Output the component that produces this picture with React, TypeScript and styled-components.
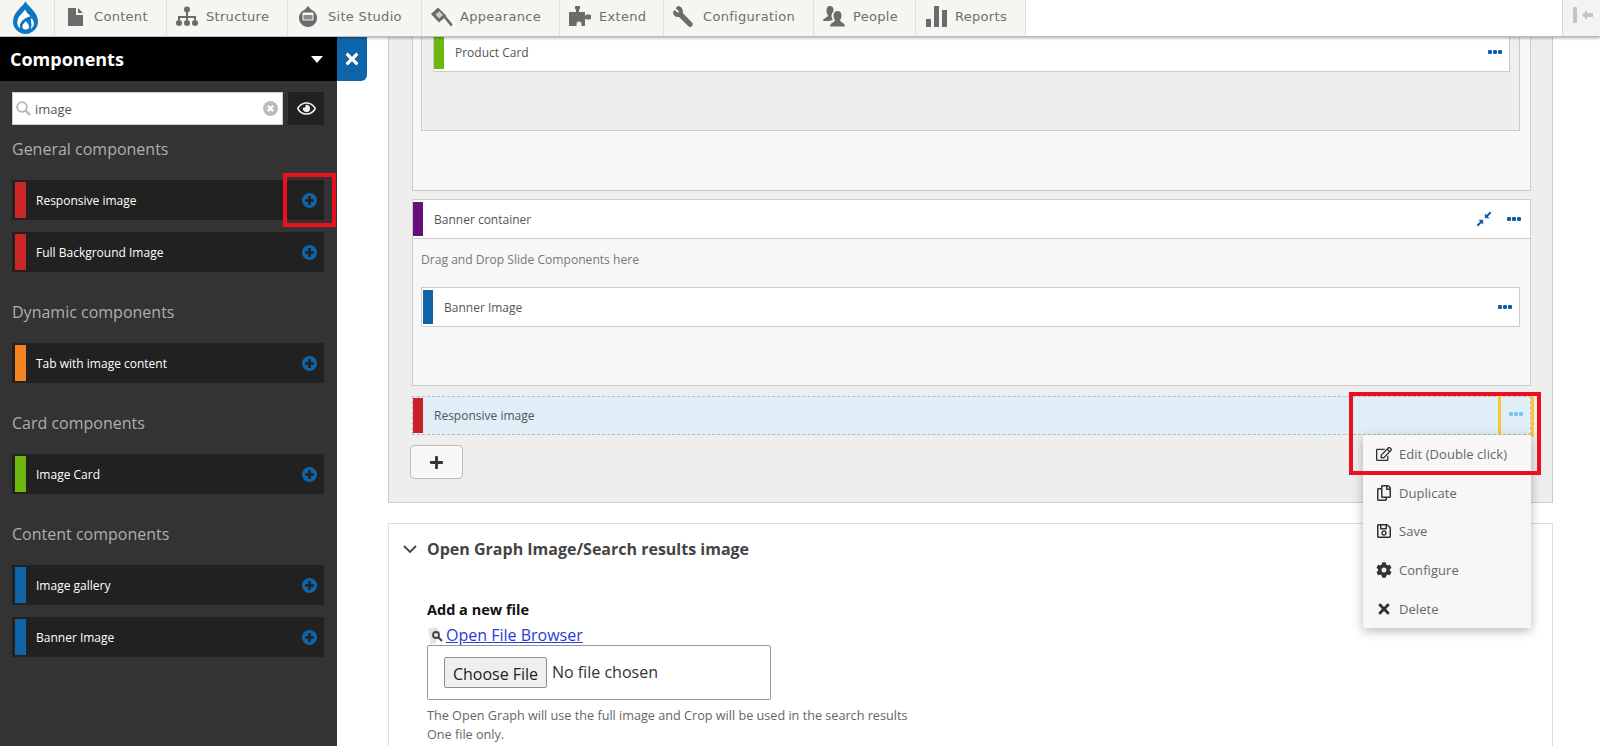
import React from 'react';
import styled, { createGlobalStyle } from 'styled-components';
import { FaRegEdit, FaRegCopy, FaRegSave, FaCog, FaTimes, FaRegEye, FaPlus } from 'react-icons/fa';

const GlobalStyle = createGlobalStyle`
  html, body {
    margin: 0;
    height: 100%;
    overflow: hidden;
    background: #fff;
    font-family: "Open Sans", "Liberation Sans", sans-serif;
  }
  * { box-sizing: border-box; }
`;

const Page = styled.div`
  height: 746px;
  display: flex;
  flex-direction: column;
  overflow: hidden;
`;

/* toolbar */
const Toolbar = styled.nav`
  height: 37px;
  flex: none;
  display: flex;
  position: relative;
  z-index: 3;
  background: #fff;
  border-bottom: 1px solid #bdbdbb;
  box-shadow: 0 1px 3px rgba(0, 0, 0, 0.35);
`;

const LogoCell = styled.div`
  width: 55px;
  background: #f5f5f2;
  border-right: 1px solid #e0e0dc;
  display: flex;
  align-items: center;
  padding: 0 0 2px 13px;
`;

const NavItem = styled.a<{ $w: number; $gap?: number; $pad?: number }>`
  width: ${(p) => p.$w}px;
  display: flex;
  align-items: center;
  gap: ${(p) => p.$gap ?? 10}px;
  padding: 0 0 3px ${(p) => p.$pad ?? 10}px;
  background: #f5f5f2;
  border-right: 1px solid #e0e0dc;
  color: #6f6f6f;
  font: 13px "DejaVu Sans", sans-serif;
  letter-spacing: 0.3px;
  svg { flex: none; fill: #6b6b6b; }
`;

const ToolbarSpacer = styled.div`
  flex: 1;
`;

const ToggleCell = styled.div`
  width: 38px;
  background: #f3f3f3;
  border-left: 1px solid #d8d8d8;
  display: flex;
  align-items: center;
  padding: 0 0 6px 10px;
`;

/* sidebar */
const Body = styled.div`
  flex: 1;
  display: flex;
  min-height: 0;
`;

const Sidebar = styled.aside`
  width: 337px;
  flex: none;
  background: #333;
  position: relative;
  z-index: 2;
`;

const SidebarHeader = styled.div`
  height: 44px;
  background: #000;
  display: flex;
  align-items: center;
  justify-content: space-between;
  padding: 0 14px 0 10px;
  color: #fff;
  font-size: 18px;
  font-weight: 700;
`;

const Caret = styled.span`
  width: 0;
  height: 0;
  border-left: 6px solid transparent;
  border-right: 6px solid transparent;
  border-top: 7px solid #fff;
`;

const CloseTab = styled.button`
  position: absolute;
  top: 0;
  left: 337px;
  width: 30px;
  height: 44px;
  border: 0;
  padding: 0;
  background: #0f65a8;
  border-bottom-right-radius: 6px;
  color: #fff;
  display: flex;
  align-items: center;
  justify-content: center;
`;

const SearchRow = styled.div`
  display: flex;
  gap: 5px;
  padding: 11px 13px 0 12px;
`;

const SearchBox = styled.div`
  flex: 1;
  height: 33px;
  background: #fff;
  border: 1px solid #ccc;
  display: flex;
  align-items: center;
  gap: 4px;
  padding: 0 4px 0 3px;
  color: #555;
  font-size: 13px;
`;

const SearchText = styled.span`
  flex: 1;
`;

const EyeButton = styled.div`
  width: 36px;
  height: 33px;
  background: #212121;
  color: #eee;
  display: flex;
  align-items: center;
  justify-content: center;
`;

const Group = styled.section`
  padding: 14px 13px 0 12px;
  & + & { padding-top: 30px; }
`;

const GroupTitle = styled.h3`
  margin: 0 0 21px;
  height: 20px;
  line-height: 21px;
  font-size: 16px;
  font-weight: 400;
  color: #aeaeae;
`;

const ItemList = styled.div`
  display: flex;
  flex-direction: column;
  gap: 12px;
`;

const Item = styled.div`
  position: relative;
  height: 40px;
  background: #212121;
  display: flex;
  align-items: center;
  padding: 2px 7px 2px 3px;
  color: #fff;
  font-size: 12px;
  font-weight: 500;
`;

const ItemBar = styled.span<{ $color: string }>`
  width: 11px;
  height: 100%;
  background: ${(p) => p.$color};
  margin-right: 10px;
`;

const ItemLabel = styled.span`
  flex: 1;
`;

const AddCircle = styled.span`
  width: 15px;
  height: 15px;
  border-radius: 50%;
  background: #0f65a8;
  color: #212121;
  display: flex;
  align-items: center;
  justify-content: center;
`;

const Highlight = styled.div<{ $l: number; $t: number; $w: number; $h: number }>`
  position: absolute;
  left: ${(p) => p.$l}px;
  top: ${(p) => p.$t}px;
  width: ${(p) => p.$w}px;
  height: ${(p) => p.$h}px;
  border: 4px solid #ea1020;
  z-index: 4;
  pointer-events: none;
`;

/* main column */
const Main = styled.main`
  flex: 1;
  min-width: 0;
  padding: 0 47px 0 51px;
  margin-top: -6px;
  color: #555;
  font-size: 12px;
`;

const LayoutPanel = styled.div`
  background: #eee;
  border: 1px solid #ccc;
  padding: 0 21px 23px 23px;
`;

const Dropzone = styled.div`
  background: #f7f7f7;
  border: 1px solid #ccc;
  border-top: 0;
  padding: 0 10px 59px 8px;
`;

const InnerZone = styled.div`
  background: #eee;
  border: 1px solid #ccc;
  border-top: 0;
  padding: 0 9px 58px 11px;
`;

const Row = styled.div<{ $flush?: boolean; $inset?: number }>`
  height: ${(p) => (p.$flush ? 39 : 40)}px;
  background: #fff;
  border: 1px solid #ccc;
  ${(p) => (p.$flush ? 'border-width: 0 0 1px;' : '')}
  display: flex;
  align-items: center;
  gap: 11px;
  padding: 2px ${(p) => (p.$flush ? 9 : 7)}px 2px ${(p) => p.$inset ?? 1}px;
  color: #555;
  font-size: 12px;
  svg { margin-right: 4px; }
`;

const RowBar = styled.span<{ $color: string }>`
  width: 10px;
  height: 100%;
  background: ${(p) => p.$color};
`;

const RowLabel = styled.span`
  flex: 1;
`;

const Dots = styled.span<{ $light?: boolean }>`
  display: flex;
  gap: 1px;
  span {
    width: 4px;
    height: 4px;
    background: ${(p) => (p.$light ? '#7cc4f0' : '#0f5fa8')};
    border-radius: 1px;
  }
`;

const More = ({ light }: { light?: boolean }) => (
  <Dots $light={light}>
    <span />
    <span />
    <span />
  </Dots>
);

const Container = styled.div`
  margin-top: 8px;
  background: #f7f7f7;
  border: 1px solid #ccc;
`;

const ContainerBody = styled.div`
  padding: 11px 10px 58px 8px;
`;

const DropHint = styled.div`
  color: #777;
  font-size: 12.1px;
  line-height: 20px;
  margin-bottom: 17px;
`;

const SelectedRow = styled.div`
  position: relative;
  height: 39px;
  margin-top: 10px;
  background: #e0eff7;
  border: 1px dashed #bbb;
  display: flex;
  align-items: center;
  padding: 1px 0 1px 0;
  gap: 11px;
  color: #555;
  font-size: 12px;
`;

const RowDivider = styled.span`
  position: absolute;
  top: -1px;
  width: 3px;
  height: 41px;
  background: #fdc42f;
`;

const LeftDivider = styled(RowDivider)`
  left: 1085px;
`;

const RightDivider = styled(RowDivider)`
  left: 1118px;
`;

const DotsSlot = styled.span`
  position: absolute;
  left: 1096px;
  top: 15px;
`;

const Menu = styled.div`
  position: absolute;
  left: 950px;
  top: 38px;
  width: 168px;
  height: 193px;
  background: #f7f7f7;
  box-shadow: 0 3px 10px rgba(0, 0, 0, 0.28);
  z-index: 3;
  display: flex;
  flex-direction: column;
`;

const MenuItem = styled.div`
  height: 38.6px;
  display: flex;
  align-items: center;
  gap: 7px;
  padding-left: 13px;
  color: #666;
  font-size: 13px;
  letter-spacing: 0.05px;
  svg { flex: none; color: #333; }
`;

const AddButton = styled.button`
  display: flex;
  align-items: center;
  justify-content: center;
  margin: 10px 0 0 -2px;
  width: 53px;
  height: 34px;
  padding: 0;
  background: #f7f7f7;
  border: 1px solid #bbb;
  border-radius: 4px;
  color: #333;
`;

const FieldPanel = styled.section`
  margin-top: 20px;
  height: 300px;
  background: #fff;
  border: 1px solid #ddd;
  padding: 15px 38px;
`;

const FieldHead = styled.div`
  display: flex;
  align-items: center;
  height: 20px;
  margin-left: -24px;
  gap: 10px;
  color: #444;
  font-size: 16px;
  font-weight: 700;
`;

const FieldLabel = styled.div`
  margin-top: 41px;
  color: #111;
  font-size: 14.5px;
  font-weight: 700;
  line-height: 20px;
`;

const BrowserLine = styled.div`
  display: flex;
  align-items: center;
  height: 20px;
  margin-top: 5px;
  gap: 2px;
`;

const BrowserLink = styled.a`
  color: #2a3bd8;
  font-size: 16px;
  text-decoration: underline;
`;

const FileBox = styled.div`
  width: 344px;
  height: 55px;
  border: 1px solid #999;
  border-radius: 2px;
  display: flex;
  align-items: center;
  gap: 5px;
  padding: 0 0 2px 16px;
  color: #333;
  font-size: 16px;
`;

const ChooseButton = styled.div`
  width: 103px;
  height: 31px;
  margin-top: 2px;
  padding-top: 2px;
  background: #efefef;
  border: 1px solid #8f8f8f;
  border-radius: 2px;
  display: flex;
  align-items: center;
  justify-content: center;
  color: #222;
`;

const HelpText = styled.div`
  margin-top: 6px;
  color: #666;
  font-size: 12.65px;
  line-height: 18.5px;
`;

const DrupalLogo = () => (
  <svg width="25" height="33" viewBox="0 0 25 33">
    <path d="M12.500 0c1.600 5 12.500 10.500 12.500 20.500a12.500 12.500 0 0 1-25 0C0 10.500 10.900 5 12.500 0z" fill="#0d78c2" />
    <path d="M12 8.500C9.500 12.500 4.800 15 4.300 21c-.2 2.800 1 5 2.900 6.700-.9-2.700-.4-5.400 2-7.900 2-2.100 5-3.700 8.300-4.600C15 13 13.300 11 12 8.500z" fill="#fff" />
    <path d="M17.800 17c2.300 1.500 3.400 3.800 3 6.500-.3 1.900-1.700 3.500-3.400 4.500.9-1.800 1.300-3.600 1-5.500-.2-1.700-.5-3.400-.6-5.500z" fill="#fff" />
    <path d="M12.800 20c.9 1.600 3.200 3 3.200 5.300a3.300 3.300 0 0 1-6.600 0c0-2.300 2.500-3.700 3.400-5.300z" fill="#fff" />
  </svg>
);

const ContentIcon = () => (
  <svg width="15" height="20" viewBox="0 0 15 20">
    <path d="M0 1h8v7h7v11H0zM10 1l5 5h-5z" />
  </svg>
);

const StructureIcon = () => (
  <svg width="22" height="21" viewBox="0 0 22 21">
    <circle cx="11" cy="3.500" r="3" />
    <path d="M10 6h2v4h8v4h-2v-2h-6v2h-2v-2H4v2H2v-4h8z" />
    <circle cx="3" cy="17" r="3" />
    <circle cx="11" cy="17" r="3" />
    <circle cx="19" cy="17" r="3" />
  </svg>
);

const StudioIcon = () => (
  <svg width="20" height="21" viewBox="0 0 20 21">
    <path d="M10 0l3 3.500a9 9 0 1 1-6 0z" />
    <rect x="4.500" y="6.500" width="11" height="8" rx="1" fill="#f5f5f2" />
    <rect x="5.500" y="9" width="9" height="4.500" fill="#8a8a8a" />
  </svg>
);

const AppearanceIcon = () => (
  <svg width="22" height="20" viewBox="0 0 22 20">
    <path d="M0 7l7-6.500 8.500 8.500L8 15.500z" />
    <path d="M4.500 7.500l3.800-3.300 3.600 3.800-3.700 3.400z" fill="#cfcfcc" />
    <path d="M13 11l1.800-1.800 7 8.300-1.900 2z" />
  </svg>
);

const ExtendIcon = () => (
  <svg width="22" height="21" viewBox="0 0 22 21">
    <path d="M6 0h5v2.500L10 4v2h6v4l1.500-1.500H20a2.500 2.500 0 0 1 0 5h-2.500L16 12.500V20h-3.500v-2a2.500 2.500 0 0 0-5 0v2H0V6h7V4L6 2.500z" />
  </svg>
);

const WrenchIcon = () => (
  <svg width="21" height="21" viewBox="0 0 21 21">
    <path d="M5 0L2.500 2 6 5.500 5 7 1.500 4 0 6c0 3 2.500 5.500 6 5l9.500 9.300c1 .9 2.300.9 3.500-.2 1-1.100 1-2.500 0-3.500L9.800 7C10.500 3 8 0 5 0z" />
  </svg>
);

const PeopleIcon = () => (
  <svg width="22" height="21" viewBox="0 0 22 21">
    <path d="M7 0c2.500 0 3.500 2 3.500 4 0 .7-.1 1.400-.4 2-1.100 1-1.600 2.500-1.600 4 0 1.400.5 2.600 1.300 3.500-.5.600-2.800 1.400-3.800 1.500H0c0-3 5-3.500 5-5.500C4 8 3.500 6 3.500 4 3.500 2 4.500 0 7 0z" />
    <path d="M14.500 5c2.500 0 4 2 4 4.500 0 2-.8 3.500-1.500 4.500 0 2.500 5 2.500 5 6.500H7c0-4 5-4 5-6.500-.7-1-1.500-2.500-1.500-4.500C10.500 7 12 5 14.500 5z" />
  </svg>
);

const ReportsIcon = () => (
  <svg width="21" height="21" viewBox="0 0 21 21">
    <rect x="0" y="13" width="5" height="8" />
    <rect x="8" y="0" width="5" height="21" />
    <rect x="16" y="4" width="5" height="17" />
  </svg>
);

const ToggleIcon = () => (
  <svg width="21" height="16" viewBox="0 0 21 16">
    <rect x="0" y="0" width="4" height="16" rx="1" fill="#c4c4c4" />
    <path d="M9 8l5-5v3h6v4h-6v3z" fill="#c4c4c4" />
  </svg>
);

const SearchIcon = () => (
  <svg width="15" height="15" viewBox="0 0 15 15" fill="none" stroke="#b5b5b5" strokeWidth="1.800">
    <circle cx="6" cy="6" r="4.800" />
    <path d="M9.500 9.500l4.500 4.500" strokeWidth="2.400" />
  </svg>
);

const ClearIcon = () => (
  <svg width="15" height="15" viewBox="0 0 15 15">
    <circle cx="7.500" cy="7.500" r="7.500" fill="#bbb" />
    <path d="M4.800 4.800l5.400 5.400M10.200 4.800l-5.400 5.400" stroke="#fff" strokeWidth="2.200" />
  </svg>
);

const CollapseIcon = () => (
  <svg width="16" height="16" viewBox="0 0 16 16" fill="#0f5fa8">
    <path d="M8.800 7.200V2.400l1.700 1.700L14 .6l1.400 1.400-3.500 3.500 1.700 1.700z" />
    <path d="M7.200 8.800v4.800l-1.700-1.700L2 15.400.6 14l3.500-3.500-1.700-1.700z" />
  </svg>
);

const FinderIcon = () => (
  <svg width="17" height="17" viewBox="0 0 17 17">
    <path d="M1 2l8-2 4 5-4 11-5 1z" fill="#e4e4e4" />
    <circle cx="9" cy="8" r="3" fill="none" stroke="#444" strokeWidth="1.800" />
    <path d="M11 10l4 4" stroke="#444" strokeWidth="2.200" />
  </svg>
);

const ChevronIcon = () => (
  <svg width="14" height="8" viewBox="0 0 14 8" fill="none" stroke="#444" strokeWidth="1.800">
    <path d="M1 1l6 6 6-6" />
  </svg>
);

const AddIcon = () => (
  <svg width="9" height="9" viewBox="0 0 9 9">
    <path d="M3.200 0h2.600v3.200H9v2.600H5.800V9H3.200V5.800H0V3.200h3.200z" fill="#212121" />
  </svg>
);

type SideItem = { label: string; color: string; flagged?: boolean };

const groups: { title: string; items: SideItem[] }[] = [
  {
    title: 'General components',
    items: [
      { label: 'Responsive image', color: '#cc2727', flagged: true },
      { label: 'Full Background Image', color: '#cc2727' },
    ],
  },
  { title: 'Dynamic components', items: [{ label: 'Tab with image content', color: '#f58220' }] },
  { title: 'Card components', items: [{ label: 'Image Card', color: '#6fb70f' }] },
  {
    title: 'Content components',
    items: [
      { label: 'Image gallery', color: '#0f65a8' },
      { label: 'Banner Image', color: '#0f65a8' },
    ],
  },
];

const navItems = [
  { label: 'Content', w: 112, icon: <ContentIcon />, gap: 11, pad: 13 },
  { label: 'Structure', w: 121, icon: <StructureIcon />, gap: 8, pad: 9 },
  { label: 'Site Studio', w: 134, icon: <StudioIcon />, gap: 10, pad: 10 },
  { label: 'Appearance', w: 138, icon: <AppearanceIcon />, gap: 7, pad: 9 },
  { label: 'Extend', w: 104, icon: <ExtendIcon />, gap: 8, pad: 9 },
  { label: 'Configuration', w: 150, icon: <WrenchIcon />, gap: 9, pad: 9 },
  { label: 'People', w: 102, icon: <PeopleIcon />, gap: 8, pad: 9 },
  { label: 'Reports', w: 110, icon: <ReportsIcon />, gap: 8, pad: 10 },
];

const menuItems = [
  { label: 'Edit (Double click)', icon: <FaRegEdit size={16} /> },
  { label: 'Duplicate', icon: <FaRegCopy size={16} /> },
  { label: 'Save', icon: <FaRegSave size={16} /> },
  { label: 'Configure', icon: <FaCog size={16} /> },
  { label: 'Delete', icon: <FaTimes size={16} /> },
];

const App = () => {
  return (
    <Page>
      <GlobalStyle />
      <Toolbar>
        <LogoCell>
          <DrupalLogo />
        </LogoCell>
        {navItems.map((n) => (
          <NavItem key={n.label} $w={n.w} $gap={n.gap} $pad={n.pad}>
            {n.icon}
            {n.label}
          </NavItem>
        ))}
        <ToolbarSpacer />
        <ToggleCell>
          <ToggleIcon />
        </ToggleCell>
      </Toolbar>
      <Body>
        <Sidebar>
          <SidebarHeader>
            Components
            <Caret />
          </SidebarHeader>
          <CloseTab>
            <FaTimes size={18} />
          </CloseTab>
          <SearchRow>
            <SearchBox>
              <SearchIcon />
              <SearchText>image</SearchText>
              <ClearIcon />
            </SearchBox>
            <EyeButton>
              <FaRegEye size={19} />
            </EyeButton>
          </SearchRow>
          {groups.map((g) => (
            <Group key={g.title}>
              <GroupTitle>{g.title}</GroupTitle>
              <ItemList>
                {g.items.map((it) => (
                  <Item key={it.label}>
                    <ItemBar $color={it.color} />
                    <ItemLabel>{it.label}</ItemLabel>
                    <AddCircle>
                      <AddIcon />
                    </AddCircle>
                    {it.flagged && <Highlight $l={271} $t={-7} $w={53} $h={54} />}
                  </Item>
                ))}
              </ItemList>
            </Group>
          ))}
        </Sidebar>
        <Main>
          <LayoutPanel>
            <Dropzone>
              <InnerZone>
                <Row $inset={0}>
                  <RowBar $color="#6fb70f" />
                  <RowLabel>Product Card</RowLabel>
                  <More />
                </Row>
              </InnerZone>
            </Dropzone>
            <Container>
              <Row $flush $inset={0}>
                <RowBar $color="#660f78" />
                <RowLabel>Banner container</RowLabel>
                <CollapseIcon />
                <More />
              </Row>
              <ContainerBody>
                <DropHint>Drag and Drop Slide Components here</DropHint>
                <Row>
                  <RowBar $color="#0f65a8" />
                  <RowLabel>Banner Image</RowLabel>
                  <More />
                </Row>
              </ContainerBody>
            </Container>
            <SelectedRow>
              <RowBar $color="#cc2027" />
              <RowLabel>Responsive image</RowLabel>
              <LeftDivider />
              <DotsSlot>
                <More light />
              </DotsSlot>
              <RightDivider />
              <Menu>
                {menuItems.map((m) => (
                  <MenuItem key={m.label}>
                    {m.icon}
                    {m.label}
                  </MenuItem>
                ))}
              </Menu>
              <Highlight $l={936} $t={-5} $w={192} $h={83} />
            </SelectedRow>
            <AddButton>
              <FaPlus size={15} />
            </AddButton>
          </LayoutPanel>
          <FieldPanel>
            <FieldHead>
              <ChevronIcon />
              Open Graph Image/Search results image
            </FieldHead>
            <FieldLabel>Add a new file</FieldLabel>
            <BrowserLine>
              <FinderIcon />
              <BrowserLink>Open File Browser</BrowserLink>
            </BrowserLine>
            <FileBox>
              <ChooseButton>Choose File</ChooseButton>
              No file chosen
            </FileBox>
            <HelpText>
              The Open Graph will use the full image and Crop will be used in the search results
              <br />
              One file only.
              <br />
              128 MB limit.
            </HelpText>
          </FieldPanel>
        </Main>
      </Body>
    </Page>
  );
};

export default App;
